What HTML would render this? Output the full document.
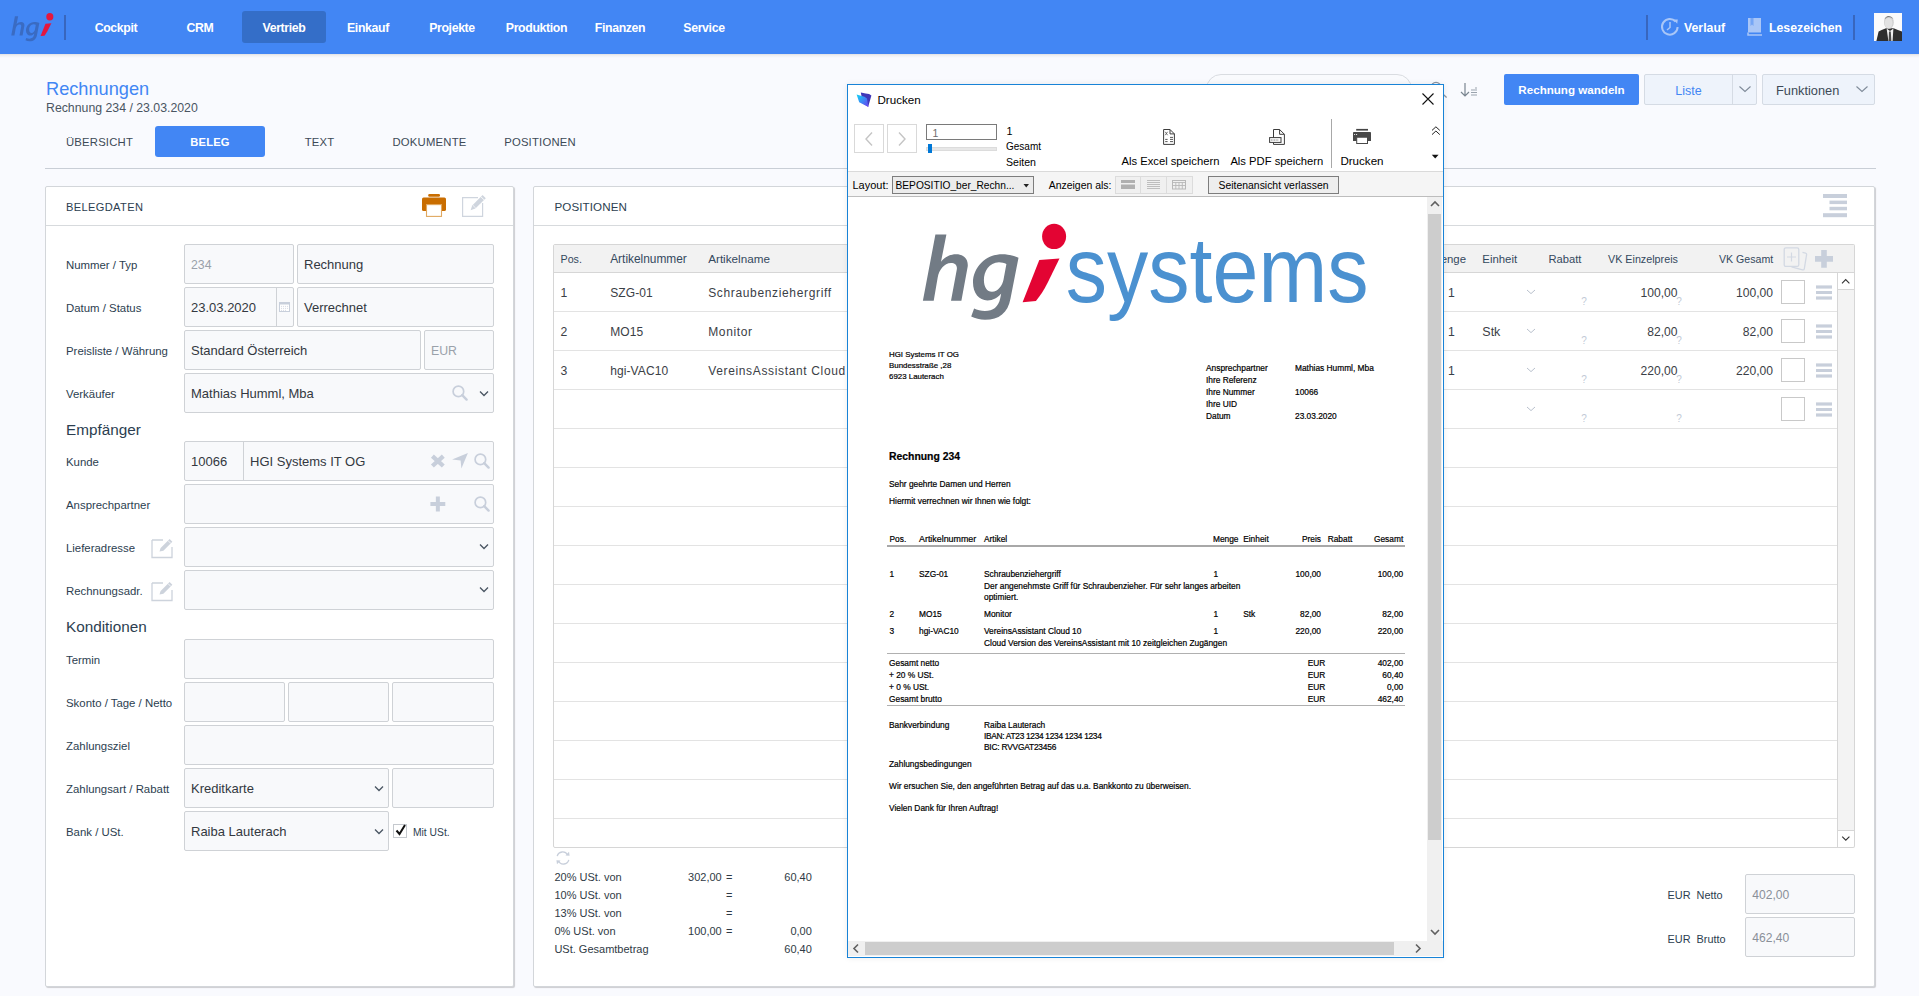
<!DOCTYPE html>
<html><head><meta charset="utf-8"><style>
*{box-sizing:border-box;margin:0;padding:0}
html,body{width:1919px;height:996px;overflow:hidden;background:#f9fafe;font-family:"Liberation Sans",sans-serif;color:#2c3e50}
body{position:relative}
.a{position:absolute;white-space:nowrap}
</style></head><body>
<div class="a" style="left:0px;top:0px;width:1919px;height:54px;background:#4286f4;"></div>
<div class="a" style="left:0px;top:54px;width:1919px;height:4px;background:linear-gradient(rgba(60,50,40,.13),rgba(60,50,40,.05) 40%,rgba(0,0,0,0));"></div>
<svg class="a" style="left:0;top:0" width="64" height="54" viewBox="0 0 64 54"><g transform="translate(11.25 35.6) scale(0.294) translate(-922.9 -300.7)"><g fill="#3a6bc2"><path d="M935.4 234.6 L946.4 234.6 L941 261.8 C945 257 950 254.3 956.2 254.3 C964 254.3 968.5 259.5 967.7 266.5 L961.4 300.7 L951 300.7 L956.8 269.5 C957.5 265 955 262.9 951 262.9 C944 262.9 939 270 937.7 277.4 L933.7 300.7 L922.9 300.7 Z"/><path fill-rule="evenodd" d="M1018.5 257.7 C1013 255.3 1007 254.3 1002.4 254.3 C985 254.3 973 268 973 282.5 C973 293 979 300.4 987.5 300.4 C993 300.4 998 297.5 1001.2 293.5 L1000.3 298 C998.5 307 993 311 985 311 C981 311 977 310 974.1 308.5 L971.2 316.6 C975 318.5 980 319.8 985 319.8 C999 319.8 1008 313 1010.5 298.5 Z M1006.4 264 C1004.5 263 1001.5 262.3 999 262.3 C989 262.3 983.9 272 983.9 280 C983.9 287 987 291.8 992 291.8 C998 291.8 1002.5 285 1003.5 279.7 Z"/></g><g fill="#e4173e"><path d="M1039.3 260 L1059.5 258.6 L1048 282 C1044 290 1040 296 1035.9 301 L1022.6 302.2 Z"/><ellipse cx="1054.1" cy="236.4" rx="12" ry="12.7"/></g></g></svg>
<div class="a" style="left:64px;top:15px;width:2px;height:25px;background:#3866bd;"></div>
<div class="a" style="left:242px;top:11px;width:84px;height:32px;background:#346ec8;border-radius:3px;"></div>
<div class="a " style="top:21px;font-size:12.3px;line-height:14px;color:#fff;font-weight:bold;left:66.0px;width:100px;text-align:center;letter-spacing:-.35px;">Cockpit</div>
<div class="a " style="top:21px;font-size:12.3px;line-height:14px;color:#fff;font-weight:bold;left:150.0px;width:100px;text-align:center;letter-spacing:-.35px;">CRM</div>
<div class="a " style="top:21px;font-size:12.3px;line-height:14px;color:#fff;font-weight:bold;left:234.0px;width:100px;text-align:center;letter-spacing:-.35px;">Vertrieb</div>
<div class="a " style="top:21px;font-size:12.3px;line-height:14px;color:#fff;font-weight:bold;left:318.0px;width:100px;text-align:center;letter-spacing:-.35px;">Einkauf</div>
<div class="a " style="top:21px;font-size:12.3px;line-height:14px;color:#fff;font-weight:bold;left:402.0px;width:100px;text-align:center;letter-spacing:-.35px;">Projekte</div>
<div class="a " style="top:21px;font-size:12.3px;line-height:14px;color:#fff;font-weight:bold;left:486.5px;width:100px;text-align:center;letter-spacing:-.35px;">Produktion</div>
<div class="a " style="top:21px;font-size:12.3px;line-height:14px;color:#fff;font-weight:bold;left:570.0px;width:100px;text-align:center;letter-spacing:-.35px;">Finanzen</div>
<div class="a " style="top:21px;font-size:12.3px;line-height:14px;color:#fff;font-weight:bold;left:654.0px;width:100px;text-align:center;letter-spacing:-.35px;">Service</div>
<div class="a" style="left:1646px;top:15px;width:2px;height:25px;background:#3866bd;"></div>
<svg class="a" style="left:1660px;top:17px;" width="20" height="20" viewBox="0 0 20 20"><path d="M15.6 4.6 A7.8 7.8 0 1 0 17.6 10" fill="none" stroke="#a9c6f7" stroke-width="2"/><path d="M13.6 2.4 L17.8 2.6 L17.2 6.8 Z" fill="#a9c6f7"/><path d="M10 5 L10 10.5 L7 13" fill="none" stroke="#a9c6f7" stroke-width="1.5"/></svg>
<div class="a " style="top:21px;font-size:12.3px;line-height:14px;color:#fff;font-weight:bold;left:1684px;">Verlauf</div>
<svg class="a" style="left:1746px;top:17px;" width="18" height="20" viewBox="0 0 18 20"><path d="M2 1 L15 1 L15 15.5 L2 15.5 Z" fill="#a9c6f7"/><path d="M2 15.5 L2 18 L16 18" fill="none" stroke="#a9c6f7" stroke-width="1.5"/><path d="M4.5 1 L4.5 9 L6 7.5 L7.5 9 L7.5 1 Z" fill="#4286f4" opacity=".5"/></svg>
<div class="a " style="top:21px;font-size:12.3px;line-height:14px;color:#fff;font-weight:bold;left:1769px;">Lesezeichen</div>
<div class="a" style="left:1853px;top:15px;width:2px;height:25px;background:#3866bd;"></div>
<svg class="a" style="left:1874px;top:13px;" width="28" height="28" viewBox="0 0 28 28"><rect width="28" height="28" fill="#fbfbfb"/><path d="M2.4 28 L4.6 18.6 Q7 17 12 15.2 L19.6 15.2 Q24 16.8 28 18.6 L28 28 Z" fill="#2e2e2e"/><path d="M12.6 15.4 L14.4 28 L18.6 28 L19.4 15.6 L16 18 Z" fill="#f0f0f0"/><path d="M15 18.4 L14.6 28 L17.4 28 L16.8 18.4 Z" fill="#4a4a4a"/><ellipse cx="14.9" cy="9.4" rx="4.9" ry="6.4" fill="#cfcfcf"/><ellipse cx="14.6" cy="10" rx="3.9" ry="5.2" fill="#e2e2e2"/><path d="M10.4 6.4 Q14.6 1.6 19.6 6.2 Q18 3.2 14.8 3 Q11.6 3.2 10.4 6.4 Z" fill="#777"/></svg>
<div class="a " style="top:79px;font-size:18.2px;line-height:20px;color:#4286f4;left:46px;">Rechnungen</div>
<div class="a " style="top:101px;font-size:12.3px;line-height:14px;color:#4a5562;left:46px;">Rechnung 234 / 23.03.2020</div>
<div class="a" style="left:155px;top:126px;width:110px;height:31px;background:#4286f4;border-radius:3px;"></div>
<div class="a " style="top:136px;font-size:11.3px;line-height:12px;color:#3d4a57;left:29.5px;width:140px;text-align:center;letter-spacing:.2px;">ÜBERSICHT</div>
<div class="a " style="top:136px;font-size:11.2px;line-height:12px;color:#fff;font-weight:bold;left:140.0px;width:140px;text-align:center;letter-spacing:.2px;">BELEG</div>
<div class="a " style="top:136px;font-size:11.3px;line-height:12px;color:#3d4a57;left:249.5px;width:140px;text-align:center;letter-spacing:.2px;">TEXT</div>
<div class="a " style="top:136px;font-size:11.3px;line-height:12px;color:#3d4a57;left:359.5px;width:140px;text-align:center;letter-spacing:.2px;">DOKUMENTE</div>
<div class="a " style="top:136px;font-size:11.3px;line-height:12px;color:#3d4a57;left:470.0px;width:140px;text-align:center;letter-spacing:.2px;">POSITIONEN</div>
<div class="a" style="left:45px;top:168px;width:1831px;height:1px;background:#c9ced6;"></div>
<div class="a" style="left:1206px;top:74px;width:206px;height:31px;border:1px solid #d9dce1;border-radius:15px;background:#f9fafd;"></div>
<svg class="a" style="left:1426px;top:78px;" width="24" height="24" viewBox="1426 78 24 24"><circle cx="1436" cy="87.4" r="5" fill="none" stroke="#8a94a0" stroke-width="1.3"/><path d="M1439.6 91 L1446.6 97.4" stroke="#8a94a0" stroke-width="1.3"/></svg>
<svg class="a" style="left:1459px;top:82px;" width="22" height="18" viewBox="0 0 22 18"><path d="M6 1 L6 14 M2 10 L6 14 L10 10" fill="none" stroke="#7a8590" stroke-width="1.2"/><path d="M12 8 H18 M12 10.5 H18 M12 13 H18" stroke="#9aa3ad" stroke-width="1"/><path d="M16 6 H18" stroke="#9aa3ad" stroke-width="1"/></svg>
<div class="a" style="left:1504px;top:74px;width:135px;height:31px;background:#4286f4;border-radius:2px;"></div>
<div class="a " style="top:84px;font-size:11.6px;line-height:12px;color:#fff;font-weight:bold;left:1501.5px;width:140px;text-align:center;">Rechnung wandeln</div>
<div class="a" style="left:1644px;top:74px;width:113px;height:31px;background:#eef3fb;border:1px solid #d5dbe4;border-radius:2px;"></div>
<div class="a" style="left:1732px;top:75px;width:1px;height:29px;background:#d5dbe4;"></div>
<div class="a " style="top:84px;font-size:12.5px;line-height:14px;color:#4286f4;left:1648.5px;width:80px;text-align:center;">Liste</div>
<svg class="a" style="left:1738px;top:83px;" width="14" height="12" viewBox="0 0 14 12"><path d="M1.5 3.5 L7 8.5 L12.5 3.5" fill="none" stroke="#7f8b99" stroke-width="1.1"/></svg>
<div class="a" style="left:1762px;top:74px;width:113px;height:31px;background:#eef3fb;border:1px solid #d5dbe4;border-radius:2px;"></div>
<div class="a " style="top:83px;font-size:12.8px;line-height:15px;color:#3d4a57;left:1776px;">Funktionen</div>
<svg class="a" style="left:1855px;top:83px;" width="14" height="12" viewBox="0 0 14 12"><path d="M1.5 3.5 L7 8.5 L12.5 3.5" fill="none" stroke="#7f8b99" stroke-width="1.1"/></svg>
<div class="a" style="left:45px;top:186px;width:469px;height:801px;background:#fff;border:1px solid #d3d6da;border-radius:2px;box-shadow:1px 1px 1px rgba(0,0,0,.18);"></div>
<div class="a" style="left:46px;top:225px;width:467px;height:1px;background:#d7dadd;"></div>
<div class="a " style="top:201px;font-size:11.1px;line-height:12px;color:#2c3e50;left:66px;letter-spacing:.35px;">BELEGDATEN</div>
<svg class="a" style="left:418px;top:190px;" width="32" height="30" viewBox="418 190 32 30"><rect x="428.2" y="193.9" width="11.8" height="2.9" rx="1.3" fill="#c96d00"/><rect x="422" y="197.6" width="24" height="13.4" rx="1.6" fill="#c96d00"/><rect x="426.5" y="204.6" width="15" height="11.8" fill="#fff" stroke="#e0a860" stroke-width="1.1"/></svg>
<svg class="a" style="left:458px;top:190px;" width="32" height="30" viewBox="458 190 32 30"><path d="M478 197.7 H462.6 V216.3 H482.6 V203" fill="none" stroke="#cfd5de" stroke-width="1.2"/><path d="M470.6 210.2 L472.2 205.4 L482.6 195 L485.8 198.2 L475.4 208.6 Z" fill="#cfd5de"/><path d="M480.9 196.7 L484.1 199.9" stroke="#fff" stroke-width=".9"/><path d="M472.6 205 L475.8 208.2" stroke="#fff" stroke-width=".7"/></svg>
<div class="a " style="top:259px;font-size:11.4px;line-height:12px;color:#2c3e50;left:66px;">Nummer / Typ</div>
<div class="a " style="top:302px;font-size:11.4px;line-height:12px;color:#2c3e50;left:66px;">Datum / Status</div>
<div class="a " style="top:345px;font-size:11.4px;line-height:12px;color:#2c3e50;left:66px;">Preisliste / Währung</div>
<div class="a " style="top:388px;font-size:11.4px;line-height:12px;color:#2c3e50;left:66px;">Verkäufer</div>
<div class="a " style="top:456px;font-size:11.4px;line-height:12px;color:#2c3e50;left:66px;">Kunde</div>
<div class="a " style="top:499px;font-size:11.4px;line-height:12px;color:#2c3e50;left:66px;">Ansprechpartner</div>
<div class="a " style="top:542px;font-size:11.4px;line-height:12px;color:#2c3e50;left:66px;">Lieferadresse</div>
<div class="a " style="top:585px;font-size:11.4px;line-height:12px;color:#2c3e50;left:66px;">Rechnungsadr.</div>
<div class="a " style="top:654px;font-size:11.4px;line-height:12px;color:#2c3e50;left:66px;">Termin</div>
<div class="a " style="top:697px;font-size:11.4px;line-height:12px;color:#2c3e50;left:66px;">Skonto / Tage / Netto</div>
<div class="a " style="top:740px;font-size:11.4px;line-height:12px;color:#2c3e50;left:66px;">Zahlungsziel</div>
<div class="a " style="top:783px;font-size:11.4px;line-height:12px;color:#2c3e50;left:66px;">Zahlungsart / Rabatt</div>
<div class="a " style="top:826px;font-size:11.4px;line-height:12px;color:#2c3e50;left:66px;">Bank / USt.</div>
<div class="a " style="top:421px;font-size:15.3px;line-height:17px;color:#2c3e50;left:66px;">Empfänger</div>
<div class="a " style="top:618px;font-size:15.3px;line-height:17px;color:#2c3e50;left:66px;">Konditionen</div>
<div class="a" style="left:184px;top:244px;width:110px;height:40px;background:#f8f9fb;border:1px solid #cfd2d6;border-radius:2px;"></div>
<div class="a" style="left:297px;top:244px;width:197px;height:40px;background:#f8f9fb;border:1px solid #cfd2d6;border-radius:2px;"></div>
<div class="a " style="top:258px;font-size:12.3px;line-height:14px;color:#9aa1aa;left:191px;">234</div>
<div class="a " style="top:257px;font-size:13px;line-height:15px;color:#333840;left:304px;">Rechnung</div>
<div class="a" style="left:184px;top:287px;width:110px;height:40px;background:#f8f9fb;border:1px solid #cfd2d6;border-radius:2px;"></div>
<div class="a" style="left:276px;top:288px;width:1px;height:38px;background:#cfd2d6;"></div>
<div class="a" style="left:297px;top:287px;width:197px;height:40px;background:#f8f9fb;border:1px solid #cfd2d6;border-radius:2px;"></div>
<div class="a " style="top:300px;font-size:13px;line-height:15px;color:#333840;left:191px;">23.03.2020</div>
<svg class="a" style="left:279px;top:302px;" width="11" height="10" viewBox="0 0 11 10"><rect x=".5" y=".5" width="10" height="9" fill="#fff" stroke="#c8cfdb"/><rect x=".5" y=".5" width="10" height="2" fill="#c8cfdb"/><g fill="#c8cfdb"><circle cx="2.6" cy="4.2" r=".55"/><circle cx="4.6" cy="4.2" r=".55"/><circle cx="6.6" cy="4.2" r=".55"/><circle cx="8.6" cy="4.2" r=".55"/><circle cx="2.6" cy="6.2" r=".55"/><circle cx="4.6" cy="6.2" r=".55"/><circle cx="6.6" cy="6.2" r=".55"/><circle cx="8.6" cy="6.2" r=".55"/><circle cx="2.6" cy="8.2" r=".55"/><circle cx="4.6" cy="8.2" r=".55"/><circle cx="6.6" cy="8.2" r=".55"/></g></svg>
<div class="a " style="top:300px;font-size:13px;line-height:15px;color:#333840;left:304px;">Verrechnet</div>
<div class="a" style="left:184px;top:330px;width:237px;height:40px;background:#f8f9fb;border:1px solid #cfd2d6;border-radius:2px;"></div>
<div class="a" style="left:424px;top:330px;width:70px;height:40px;background:#f8f9fb;border:1px solid #cfd2d6;border-radius:2px;"></div>
<div class="a " style="top:343px;font-size:13px;line-height:15px;color:#333840;left:191px;">Standard Österreich</div>
<div class="a " style="top:344px;font-size:12.3px;line-height:14px;color:#9aa1aa;left:431px;">EUR</div>
<div class="a" style="left:184px;top:373px;width:310px;height:40px;background:#f8f9fb;border:1px solid #cfd2d6;border-radius:2px;"></div>
<div class="a " style="top:386px;font-size:13px;line-height:15px;color:#333840;left:191px;">Mathias Humml, Mba</div>
<svg class="a" style="left:452px;top:385px;" width="16" height="16" viewBox="0 0 16 16"><circle cx="6.4" cy="6.4" r="5.3" fill="none" stroke="#c8cfdb" stroke-width="1.7"/><path d="M10.2 10.2 L14.6 14.6" stroke="#c8cfdb" stroke-width="2.4" stroke-linecap="round"/></svg>
<svg class="a" style="left:479px;top:390px;" width="10" height="7" viewBox="0 0 10 7"><path d="M1 1.5 L5 5.5 L9 1.5" fill="none" stroke="#4a5562" stroke-width="1.3"/></svg>
<div class="a" style="left:184px;top:441px;width:310px;height:40px;background:#f8f9fb;border:1px solid #cfd2d6;border-radius:2px;"></div>
<div class="a" style="left:243px;top:442px;width:1px;height:38px;background:#cfd2d6;"></div>
<div class="a " style="top:454px;font-size:13px;line-height:15px;color:#333840;left:191px;">10066</div>
<div class="a " style="top:454px;font-size:13px;line-height:15px;color:#333840;left:250px;">HGI Systems IT OG</div>
<svg class="a" style="left:428px;top:452px;" width="20" height="18" viewBox="428 452 20 18"><path d="M432.4 456.1 L443.3 466 M443.3 456.1 L432.4 466" stroke="#c8cfdb" stroke-width="4.3" stroke-linecap="butt"/></svg>
<svg class="a" style="left:451px;top:452px;" width="18" height="18" viewBox="0 0 18 18"><path d="M1.1 7.4 L16.9 1.1 L10.4 16.5 L9.6 8.6 Z" fill="#c8cfdb"/></svg>
<svg class="a" style="left:474px;top:453px;" width="16" height="16" viewBox="0 0 16 16"><circle cx="6.4" cy="6.4" r="5.3" fill="none" stroke="#c8cfdb" stroke-width="1.7"/><path d="M10.2 10.2 L14.6 14.6" stroke="#c8cfdb" stroke-width="2.4" stroke-linecap="round"/></svg>
<div class="a" style="left:184px;top:484px;width:310px;height:40px;background:#f8f9fb;border:1px solid #cfd2d6;border-radius:2px;"></div>
<svg class="a" style="left:428px;top:494px;" width="20" height="20" viewBox="428 494 20 20"><path d="M437.85 496.5 V511.4 M430.4 503.95 H445.3" stroke="#c8cfdb" stroke-width="4"/></svg>
<svg class="a" style="left:474px;top:496px;" width="16" height="16" viewBox="0 0 16 16"><circle cx="6.4" cy="6.4" r="5.3" fill="none" stroke="#c8cfdb" stroke-width="1.7"/><path d="M10.2 10.2 L14.6 14.6" stroke="#c8cfdb" stroke-width="2.4" stroke-linecap="round"/></svg>
<div class="a" style="left:184px;top:527px;width:310px;height:40px;background:#f8f9fb;border:1px solid #cfd2d6;border-radius:2px;"></div>
<svg class="a" style="left:479px;top:543px;" width="10" height="7" viewBox="0 0 10 7"><path d="M1 1.5 L5 5.5 L9 1.5" fill="none" stroke="#4a5562" stroke-width="1.3"/></svg>
<svg class="a" style="left:150px;top:537px;" width="26" height="24" viewBox="0 0 26 24"><path d="M2 3 H13 M2 3 V20.5 H22 V10" fill="none" stroke="#cdd3dc" stroke-width="1.3"/><path d="M9.5 14.5 L10.6 11 L19.6 2 L22.4 4.8 L13.4 13.8 Z" fill="#cdd3dc"/><path d="M18 3.6 L20.8 6.4" stroke="#fff" stroke-width=".8"/></svg>
<div class="a" style="left:184px;top:570px;width:310px;height:40px;background:#f8f9fb;border:1px solid #cfd2d6;border-radius:2px;"></div>
<svg class="a" style="left:479px;top:586px;" width="10" height="7" viewBox="0 0 10 7"><path d="M1 1.5 L5 5.5 L9 1.5" fill="none" stroke="#4a5562" stroke-width="1.3"/></svg>
<svg class="a" style="left:150px;top:580px;" width="26" height="24" viewBox="0 0 26 24"><path d="M2 3 H13 M2 3 V20.5 H22 V10" fill="none" stroke="#cdd3dc" stroke-width="1.3"/><path d="M9.5 14.5 L10.6 11 L19.6 2 L22.4 4.8 L13.4 13.8 Z" fill="#cdd3dc"/><path d="M18 3.6 L20.8 6.4" stroke="#fff" stroke-width=".8"/></svg>
<div class="a" style="left:184px;top:639px;width:310px;height:40px;background:#f8f9fb;border:1px solid #cfd2d6;border-radius:2px;"></div>
<div class="a" style="left:184px;top:682px;width:101px;height:40px;background:#f8f9fb;border:1px solid #cfd2d6;border-radius:2px;"></div>
<div class="a" style="left:288px;top:682px;width:101px;height:40px;background:#f8f9fb;border:1px solid #cfd2d6;border-radius:2px;"></div>
<div class="a" style="left:392px;top:682px;width:102px;height:40px;background:#f8f9fb;border:1px solid #cfd2d6;border-radius:2px;"></div>
<div class="a" style="left:184px;top:725px;width:310px;height:40px;background:#f8f9fb;border:1px solid #cfd2d6;border-radius:2px;"></div>
<div class="a" style="left:184px;top:768px;width:205px;height:40px;background:#f8f9fb;border:1px solid #cfd2d6;border-radius:2px;"></div>
<div class="a" style="left:392px;top:768px;width:102px;height:40px;background:#f8f9fb;border:1px solid #cfd2d6;border-radius:2px;"></div>
<div class="a " style="top:781px;font-size:13px;line-height:15px;color:#333840;left:191px;">Kreditkarte</div>
<svg class="a" style="left:374px;top:785px;" width="10" height="7" viewBox="0 0 10 7"><path d="M1 1.5 L5 5.5 L9 1.5" fill="none" stroke="#4a5562" stroke-width="1.3"/></svg>
<div class="a" style="left:184px;top:811px;width:205px;height:40px;background:#f8f9fb;border:1px solid #cfd2d6;border-radius:2px;"></div>
<div class="a " style="top:824px;font-size:13px;line-height:15px;color:#333840;left:191px;">Raiba Lauterach</div>
<svg class="a" style="left:374px;top:828px;" width="10" height="7" viewBox="0 0 10 7"><path d="M1 1.5 L5 5.5 L9 1.5" fill="none" stroke="#4a5562" stroke-width="1.3"/></svg>
<div class="a" style="left:393px;top:824px;width:14px;height:14px;background:#fff;border:1px solid #c5c9ce;"></div>
<svg class="a" style="left:393px;top:822px;" width="16" height="16" viewBox="0 0 16 16"><path d="M3.5 8.5 L6.5 12 L12 3" fill="none" stroke="#111" stroke-width="2"/></svg>
<div class="a " style="top:827px;font-size:10.3px;line-height:11px;color:#2c3e50;left:413px;">Mit USt.</div>
<div class="a" style="left:533px;top:186px;width:1342px;height:801px;background:#fff;border:1px solid #d3d6da;border-radius:2px;box-shadow:1px 1px 1px rgba(0,0,0,.18);"></div>
<div class="a" style="left:534px;top:225px;width:1340px;height:1px;background:#d7dadd;"></div>
<div class="a " style="top:201px;font-size:11.6px;line-height:12px;color:#2c3e50;left:554.5px;letter-spacing:.1px;">POSITIONEN</div>
<svg class="a" style="left:1823px;top:194px;" width="24" height="24" viewBox="0 0 24 24"><g fill="#c8cfdb"><rect x="0" y="0" width="24" height="4"/><rect x="6.5" y="6.6" width="17.5" height="3.5"/><rect x="6.5" y="12.8" width="17.5" height="3.5"/><rect x="0" y="19.2" width="24" height="4"/></g></svg>
<div class="a" style="left:553px;top:244px;width:302px;height:604px;border:1px solid #d6d6d6;border-radius:2px;background:#fff;"></div>
<div class="a" style="left:1443px;top:244px;width:412px;height:604px;border:1px solid #d6d6d6;border-right-width:1px;border-left:none;border-radius:2px;background:#fff;"></div>
<div class="a" style="left:554px;top:245px;width:300px;height:27px;background:#f2f2f2;"></div>
<div class="a" style="left:1443px;top:245px;width:411px;height:27px;background:#f2f2f2;"></div>
<div class="a" style="left:553px;top:272px;width:302px;height:1px;background:#d6d6d6;"></div>
<div class="a" style="left:1443px;top:272px;width:412px;height:1px;background:#d6d6d6;"></div>
<div class="a " style="top:253px;font-size:10.7px;line-height:12px;color:#34495e;left:560.5px;">Pos.</div>
<div class="a " style="top:252px;font-size:11.9px;line-height:14px;color:#34495e;left:610.2px;">Artikelnummer</div>
<div class="a " style="top:252px;font-size:11.7px;line-height:13px;color:#34495e;left:708.2px;">Artikelname</div>
<div class="a " style="top:253px;font-size:11.4px;line-height:12px;color:#34495e;right:453px;text-align:right;">Menge</div>
<div class="a " style="top:253px;font-size:11.4px;line-height:12px;color:#34495e;left:1482.3px;">Einheit</div>
<div class="a " style="top:253px;font-size:11.2px;line-height:12px;color:#34495e;left:1548.4px;">Rabatt</div>
<div class="a " style="top:253px;font-size:10.75px;line-height:12px;color:#34495e;left:1608px;">VK Einzelpreis</div>
<div class="a " style="top:253px;font-size:10.6px;line-height:12px;color:#34495e;left:1719px;">VK Gesamt</div>
<svg class="a" style="left:1782px;top:246px;" width="26" height="26" viewBox="0 0 26 26"><path d="M9.5 20.8 L20.6 23.8 Q22 24.1 22.3 22.8 L24.6 8.6 Q24.8 7.4 23.6 7.1 L20.5 6.3" fill="none" stroke="#d3d9e3" stroke-width="1.3"/><rect x="2.2" y="1.8" width="14.6" height="18.6" rx="1.6" fill="#f2f2f2" stroke="#d3d9e3" stroke-width="1.3"/><path d="M9.5 6.5 V15.5 M5 11 H14" stroke="#d3d9e3" stroke-width="1.2"/></svg>
<svg class="a" style="left:1815px;top:250px;" width="18" height="18" viewBox="0 0 18 18"><path d="M9 0 V17.7 M0 8.85 H18" stroke="#c8cfdb" stroke-width="5.6"/></svg>
<div class="a" style="left:554px;top:311px;width:300px;height:1px;background:#e3e3e3;"></div>
<div class="a" style="left:1443px;top:311px;width:394px;height:1px;background:#e3e3e3;"></div>
<div class="a" style="left:554px;top:350px;width:300px;height:1px;background:#e3e3e3;"></div>
<div class="a" style="left:1443px;top:350px;width:394px;height:1px;background:#e3e3e3;"></div>
<div class="a" style="left:554px;top:389px;width:300px;height:1px;background:#e3e3e3;"></div>
<div class="a" style="left:1443px;top:389px;width:394px;height:1px;background:#e3e3e3;"></div>
<div class="a" style="left:554px;top:428px;width:300px;height:1px;background:#e3e3e3;"></div>
<div class="a" style="left:1443px;top:428px;width:394px;height:1px;background:#e3e3e3;"></div>
<div class="a" style="left:554px;top:467px;width:300px;height:1px;background:#e3e3e3;"></div>
<div class="a" style="left:1443px;top:467px;width:394px;height:1px;background:#e3e3e3;"></div>
<div class="a" style="left:554px;top:506px;width:300px;height:1px;background:#e3e3e3;"></div>
<div class="a" style="left:1443px;top:506px;width:394px;height:1px;background:#e3e3e3;"></div>
<div class="a" style="left:554px;top:545px;width:300px;height:1px;background:#e3e3e3;"></div>
<div class="a" style="left:1443px;top:545px;width:394px;height:1px;background:#e3e3e3;"></div>
<div class="a" style="left:554px;top:584px;width:300px;height:1px;background:#e3e3e3;"></div>
<div class="a" style="left:1443px;top:584px;width:394px;height:1px;background:#e3e3e3;"></div>
<div class="a" style="left:554px;top:623px;width:300px;height:1px;background:#e3e3e3;"></div>
<div class="a" style="left:1443px;top:623px;width:394px;height:1px;background:#e3e3e3;"></div>
<div class="a" style="left:554px;top:662px;width:300px;height:1px;background:#e3e3e3;"></div>
<div class="a" style="left:1443px;top:662px;width:394px;height:1px;background:#e3e3e3;"></div>
<div class="a" style="left:554px;top:701px;width:300px;height:1px;background:#e3e3e3;"></div>
<div class="a" style="left:1443px;top:701px;width:394px;height:1px;background:#e3e3e3;"></div>
<div class="a" style="left:554px;top:740px;width:300px;height:1px;background:#e3e3e3;"></div>
<div class="a" style="left:1443px;top:740px;width:394px;height:1px;background:#e3e3e3;"></div>
<div class="a" style="left:554px;top:779px;width:300px;height:1px;background:#e3e3e3;"></div>
<div class="a" style="left:1443px;top:779px;width:394px;height:1px;background:#e3e3e3;"></div>
<div class="a" style="left:554px;top:818px;width:300px;height:1px;background:#e3e3e3;"></div>
<div class="a" style="left:1443px;top:818px;width:394px;height:1px;background:#e3e3e3;"></div>
<div class="a " style="top:286px;font-size:12.2px;line-height:14px;color:#3b4046;left:560.5px;">1</div>
<div class="a " style="top:286px;font-size:12.0px;line-height:14px;color:#3b4046;left:610.2px;letter-spacing:.1px;">SZG-01</div>
<div class="a " style="top:286px;font-size:12.0px;line-height:14px;color:#3b4046;left:708.2px;letter-spacing:.65px;">Schraubenziehergriff</div>
<div class="a " style="top:286px;font-size:12.2px;line-height:14px;color:#3b4046;left:1448px;">1</div>
<div class="a " style="top:286px;font-size:12.1px;line-height:14px;color:#3b4046;right:241.5px;text-align:right;">100,00</div>
<div class="a " style="top:286px;font-size:12.1px;line-height:14px;color:#3b4046;right:146px;text-align:right;">100,00</div>
<svg class="a" style="left:1526px;top:289px;" width="10" height="6" viewBox="0 0 10 6"><path d="M1 1 L5 4.6 L9 1" fill="none" stroke="#b9c1cd" stroke-width="1"/></svg>
<div class="a " style="top:296px;font-size:10px;line-height:11px;color:#c2cad6;left:1581.3px;">?</div>
<div class="a " style="top:296px;font-size:10px;line-height:11px;color:#c2cad6;left:1676.2px;">?</div>
<div class="a" style="left:1781px;top:280px;width:24px;height:24px;border:1px solid #c9c9c9;background:#fff;"></div>
<svg class="a" style="left:1816px;top:285px;" width="16" height="15" viewBox="0 0 16 15"><g fill="#c8cfdb"><rect y="0.4" width="16" height="3.2"/><rect y="6" width="16" height="3"/><rect y="11.4" width="16" height="3.2"/></g></svg>
<div class="a " style="top:325px;font-size:12.2px;line-height:14px;color:#3b4046;left:560.5px;">2</div>
<div class="a " style="top:325px;font-size:12.0px;line-height:14px;color:#3b4046;left:610.2px;letter-spacing:.1px;">MO15</div>
<div class="a " style="top:325px;font-size:12.0px;line-height:14px;color:#3b4046;left:708.2px;letter-spacing:.65px;">Monitor</div>
<div class="a " style="top:325px;font-size:12.2px;line-height:14px;color:#3b4046;left:1448px;">1</div>
<div class="a " style="top:325px;font-size:12.5px;line-height:14px;color:#3b4046;left:1482.3px;">Stk</div>
<div class="a " style="top:325px;font-size:12.1px;line-height:14px;color:#3b4046;right:241.5px;text-align:right;">82,00</div>
<div class="a " style="top:325px;font-size:12.1px;line-height:14px;color:#3b4046;right:146px;text-align:right;">82,00</div>
<svg class="a" style="left:1526px;top:328px;" width="10" height="6" viewBox="0 0 10 6"><path d="M1 1 L5 4.6 L9 1" fill="none" stroke="#b9c1cd" stroke-width="1"/></svg>
<div class="a " style="top:335px;font-size:10px;line-height:11px;color:#c2cad6;left:1581.3px;">?</div>
<div class="a " style="top:335px;font-size:10px;line-height:11px;color:#c2cad6;left:1676.2px;">?</div>
<div class="a" style="left:1781px;top:319px;width:24px;height:24px;border:1px solid #c9c9c9;background:#fff;"></div>
<svg class="a" style="left:1816px;top:324px;" width="16" height="15" viewBox="0 0 16 15"><g fill="#c8cfdb"><rect y="0.4" width="16" height="3.2"/><rect y="6" width="16" height="3"/><rect y="11.4" width="16" height="3.2"/></g></svg>
<div class="a " style="top:364px;font-size:12.2px;line-height:14px;color:#3b4046;left:560.5px;">3</div>
<div class="a " style="top:364px;font-size:12.0px;line-height:14px;color:#3b4046;left:610.2px;letter-spacing:.1px;">hgi-VAC10</div>
<div class="a " style="top:364px;font-size:12.0px;line-height:14px;color:#3b4046;left:708.2px;letter-spacing:.65px;">VereinsAssistant Cloud</div>
<div class="a " style="top:364px;font-size:12.2px;line-height:14px;color:#3b4046;left:1448px;">1</div>
<div class="a " style="top:364px;font-size:12.1px;line-height:14px;color:#3b4046;right:241.5px;text-align:right;">220,00</div>
<div class="a " style="top:364px;font-size:12.1px;line-height:14px;color:#3b4046;right:146px;text-align:right;">220,00</div>
<svg class="a" style="left:1526px;top:367px;" width="10" height="6" viewBox="0 0 10 6"><path d="M1 1 L5 4.6 L9 1" fill="none" stroke="#b9c1cd" stroke-width="1"/></svg>
<div class="a " style="top:374px;font-size:10px;line-height:11px;color:#c2cad6;left:1581.3px;">?</div>
<div class="a " style="top:374px;font-size:10px;line-height:11px;color:#c2cad6;left:1676.2px;">?</div>
<div class="a" style="left:1781px;top:358px;width:24px;height:24px;border:1px solid #c9c9c9;background:#fff;"></div>
<svg class="a" style="left:1816px;top:363px;" width="16" height="15" viewBox="0 0 16 15"><g fill="#c8cfdb"><rect y="0.4" width="16" height="3.2"/><rect y="6" width="16" height="3"/><rect y="11.4" width="16" height="3.2"/></g></svg>
<svg class="a" style="left:1526px;top:406px;" width="10" height="6" viewBox="0 0 10 6"><path d="M1 1 L5 4.6 L9 1" fill="none" stroke="#b9c1cd" stroke-width="1"/></svg>
<div class="a " style="top:413px;font-size:10px;line-height:11px;color:#c2cad6;left:1581.3px;">?</div>
<div class="a " style="top:413px;font-size:10px;line-height:11px;color:#c2cad6;left:1676.2px;">?</div>
<div class="a" style="left:1781px;top:397px;width:24px;height:24px;border:1px solid #c9c9c9;background:#fff;"></div>
<svg class="a" style="left:1816px;top:402px;" width="16" height="15" viewBox="0 0 16 15"><g fill="#c8cfdb"><rect y="0.4" width="16" height="3.2"/><rect y="6" width="16" height="3"/><rect y="11.4" width="16" height="3.2"/></g></svg>
<div class="a" style="left:1837px;top:272px;width:1px;height:575px;background:#d6d6d6;"></div>
<div class="a" style="left:1838px;top:290px;width:16px;height:540px;background:#f3f3f3;"></div>
<div class="a" style="left:1838px;top:289px;width:16px;height:1px;background:#d6d6d6;"></div>
<div class="a" style="left:1838px;top:830px;width:16px;height:1px;background:#d6d6d6;"></div>
<svg class="a" style="left:1838px;top:275px;" width="16" height="12" viewBox="1838 275 16 12"><path d="M1842 283.3 L1845.7 279.6 L1849.4 283.3" fill="none" stroke="#333" stroke-width="1.1"/></svg>
<svg class="a" style="left:1838px;top:832px;" width="16" height="12" viewBox="1838 832 16 12"><path d="M1842.2 836.6 L1845.8 840.2 L1849.4 836.6" fill="none" stroke="#333" stroke-width="1.1"/></svg>
<svg class="a" style="left:554px;top:850px;" width="18" height="16" viewBox="0 0 18 16"><path d="M3.2 6.2 A5.6 5.6 0 0 1 13.6 5" fill="none" stroke="#c8cfdb" stroke-width="1.3"/><path d="M14.8 9.8 A5.6 5.6 0 0 1 4.4 11" fill="none" stroke="#c8cfdb" stroke-width="1.3"/><path d="M11.5 5.4 L15.6 5.8 L15 1.8 Z" fill="#c8cfdb"/><path d="M6.5 10.6 L2.4 10.2 L3 14.2 Z" fill="#c8cfdb"/></svg>
<div class="a " style="top:871px;font-size:11.0px;line-height:12px;color:#2f3a45;left:554.4px;">20% USt. von</div>
<div class="a " style="top:871px;font-size:11.0px;line-height:12px;color:#2f3a45;right:1197.3px;text-align:right;">302,00</div>
<div class="a " style="top:871px;font-size:11.0px;line-height:12px;color:#2f3a45;left:726px;">=</div>
<div class="a " style="top:871px;font-size:11.0px;line-height:12px;color:#2f3a45;right:1107.2px;text-align:right;">60,40</div>
<div class="a " style="top:889px;font-size:11.0px;line-height:12px;color:#2f3a45;left:554.4px;">10% USt. von</div>
<div class="a " style="top:889px;font-size:11.0px;line-height:12px;color:#2f3a45;left:726px;">=</div>
<div class="a " style="top:907px;font-size:11.0px;line-height:12px;color:#2f3a45;left:554.4px;">13% USt. von</div>
<div class="a " style="top:907px;font-size:11.0px;line-height:12px;color:#2f3a45;left:726px;">=</div>
<div class="a " style="top:925px;font-size:11.0px;line-height:12px;color:#2f3a45;left:554.4px;">0% USt. von</div>
<div class="a " style="top:925px;font-size:11.0px;line-height:12px;color:#2f3a45;right:1197.3px;text-align:right;">100,00</div>
<div class="a " style="top:925px;font-size:11.0px;line-height:12px;color:#2f3a45;left:726px;">=</div>
<div class="a " style="top:925px;font-size:11.0px;line-height:12px;color:#2f3a45;right:1107.2px;text-align:right;">0,00</div>
<div class="a " style="top:943px;font-size:11.0px;line-height:12px;color:#2f3a45;left:554.4px;">USt. Gesamtbetrag</div>
<div class="a " style="top:943px;font-size:11.0px;line-height:12px;color:#2f3a45;right:1107.2px;text-align:right;">60,40</div>
<div class="a " style="top:889px;font-size:10.9px;line-height:12px;color:#2c3e50;left:1667.5px;">EUR&nbsp; Netto</div>
<div class="a " style="top:933px;font-size:10.9px;line-height:12px;color:#2c3e50;left:1667.5px;">EUR&nbsp; Brutto</div>
<div class="a" style="left:1745px;top:874px;width:110px;height:40px;background:#f8f9fb;border:1px solid #cfd2d6;border-radius:2px;"></div>
<div class="a" style="left:1745px;top:917px;width:110px;height:40px;background:#f8f9fb;border:1px solid #cfd2d6;border-radius:2px;"></div>
<div class="a " style="top:888px;font-size:12.1px;line-height:14px;color:#8a9099;left:1752.3px;">402,00</div>
<div class="a " style="top:931px;font-size:12.1px;line-height:14px;color:#8a9099;left:1752.3px;">462,40</div>
<div class="a" style="left:847px;top:84px;width:597px;height:874px;background:#fff;border:1px solid #1883d7;box-shadow:0 0 6px rgba(0,0,0,.08);"></div>
<svg class="a" style="left:855px;top:91px;" width="18" height="17" viewBox="0 0 18 17"><defs><linearGradient id="fg" x1="0" y1="0" x2="1" y2="1"><stop offset="0" stop-color="#12d6f5"/><stop offset=".5" stop-color="#3b8af5"/><stop offset="1" stop-color="#6a3cf0"/></linearGradient></defs><path d="M5.8 1.6 L10.6 2.6 Q14.6 2.8 16.4 4.6 L13.2 15.8 L8 12.6 Z" fill="#3f37b8"/><path d="M1.6 3.6 L5.8 4.8 Q10 5.4 12 7.4 L13.4 15.9 L4.2 11.2 Z" fill="url(#fg)"/></svg>
<div class="a " style="top:94px;font-size:11.6px;line-height:12px;color:#000;left:877.5px;">Drucken</div>
<svg class="a" style="left:1421px;top:92px;" width="14" height="14" viewBox="0 0 14 14"><path d="M1.5 1.5 L12.5 12.5 M12.5 1.5 L1.5 12.5" stroke="#111" stroke-width="1.1"/></svg>
<div class="a" style="left:854px;top:124px;width:30px;height:29px;border:1px solid #d9d9d9;background:#fff;"></div>
<div class="a" style="left:887px;top:124px;width:30px;height:29px;border:1px solid #d9d9d9;background:#fff;"></div>
<svg class="a" style="left:863px;top:131px;" width="12" height="16" viewBox="0 0 12 16"><path d="M9 1.5 L3 8 L9 14.5" fill="none" stroke="#c4c4c4" stroke-width="1.4"/></svg>
<svg class="a" style="left:896px;top:131px;" width="12" height="16" viewBox="0 0 12 16"><path d="M3 1.5 L9 8 L3 14.5" fill="none" stroke="#c4c4c4" stroke-width="1.4"/></svg>
<div class="a" style="left:926px;top:124px;width:71px;height:16px;border:1px solid #7a7a7a;background:#fff;"></div>
<div class="a " style="top:127px;font-size:10.5px;line-height:12px;color:#6d6d6d;left:932.5px;">1</div>
<div class="a" style="left:926px;top:147px;width:71px;height:4px;background:#e7e7e7;border:1px solid #dcdcdc;"></div>
<div class="a" style="left:928px;top:144px;width:4px;height:9px;background:#0078d7;"></div>
<div class="a " style="top:125px;font-size:10.8px;line-height:12px;color:#000;left:1006.4px;">1</div>
<div class="a " style="top:141px;font-size:10.0px;line-height:11px;color:#000;left:1006px;">Gesamt</div>
<div class="a " style="top:156px;font-size:10.58px;line-height:12px;color:#000;left:1006px;">Seiten</div>
<svg class="a" style="left:1160px;top:126px;" width="20" height="22" viewBox="1160 126 20 22"><path d="M1163.6 129.5 H1170 L1174.4 133.9 V144.4 H1163.6 Z" fill="#fff" stroke="#3c3c3c" stroke-width="1"/><path d="M1170 129.5 V133.9 H1174.4" fill="none" stroke="#3c3c3c" stroke-width="1"/><path d="M1165.2 131.8 L1167.6 135.2 M1167.6 131.8 L1165.2 135.2" stroke="#555" stroke-width=".8"/><path d="M1165.2 139.4 H1167.6 M1170 139.4 H1173 M1165.2 141.6 H1167.6 M1170 141.6 H1173 M1170 137.4 H1173" stroke="#444" stroke-width=".9"/></svg>
<div class="a " style="top:155px;font-size:11.23px;line-height:12px;color:#000;left:1121.5px;">Als Excel speichern</div>
<svg class="a" style="left:1266px;top:126px;" width="22" height="22" viewBox="1266 126 22 22"><path d="M1273.5 129.5 H1279.6 L1284.4 134.3 V144.4 H1273.5 Z" fill="#fff" stroke="#3c3c3c" stroke-width="1"/><path d="M1279.6 129.5 V134.3 H1284.4" fill="none" stroke="#3c3c3c" stroke-width="1"/><rect x="1269.6" y="137.6" width="11.4" height="4.8" fill="#fff" stroke="#3c3c3c" stroke-width="1"/><path d="M1271.4 139.1 V141 M1273 139.1 V141 M1274.6 139.1 V141 M1276.2 139.1 V141 M1277.8 139.1 V141" stroke="#888" stroke-width=".6"/></svg>
<div class="a " style="top:155px;font-size:11.23px;line-height:12px;color:#000;left:1230.4px;">Als PDF speichern</div>
<div class="a" style="left:1331px;top:119px;width:1px;height:49px;background:#a8a8a8;"></div>
<svg class="a" style="left:1350px;top:126px;" width="24" height="22" viewBox="1350 126 24 22"><rect x="1356.2" y="128.9" width="11.8" height="1.7" fill="#444"/><path d="M1353.8 132.1 H1370.2 Q1371 132.1 1371 133 V140.9 H1353 V133 Q1353 132.1 1353.8 132.1 Z" fill="#484848"/><rect x="1356.7" y="137.2" width="10.8" height="6.3" fill="#fff" stroke="#484848" stroke-width="1"/><circle cx="1354.6" cy="134.5" r=".6" fill="#fff"/><circle cx="1356.6" cy="134.5" r=".6" fill="#fff"/></svg>
<div class="a " style="top:155px;font-size:11.6px;line-height:12px;color:#000;left:1340.4px;">Drucken</div>
<svg class="a" style="left:1429px;top:124px;" width="14" height="13" viewBox="1429 124 14 13"><path d="M1432 130.4 L1435.9 126.8 L1439.8 130.4 M1432 134.6 L1435.9 131 L1439.8 134.6" fill="none" stroke="#222" stroke-width="1"/></svg>
<svg class="a" style="left:1429px;top:153px;" width="14" height="8" viewBox="1429 153 14 8"><path d="M1431.8 154.8 L1438.6 154.8 L1435.2 158.6 Z" fill="#111"/></svg>
<div class="a" style="left:848px;top:171px;width:595px;height:1px;background:#dadada;"></div>
<div class="a" style="left:848px;top:172px;width:595px;height:24px;background:#f5f5f5;"></div>
<div class="a" style="left:848px;top:196px;width:595px;height:1px;background:#bdbdbd;"></div>
<div class="a " style="top:179px;font-size:10.97px;line-height:12px;color:#000;left:852.5px;">Layout:</div>
<div class="a" style="left:892px;top:176px;width:142px;height:18px;background:#ececec;border:1px solid #7d7d7d;"></div>
<div class="a " style="top:180px;font-size:10.2px;line-height:11px;color:#000;left:895.5px;">BEPOSITIO_ber_Rechn...</div>
<svg class="a" style="left:1020px;top:182px;" width="12" height="8" viewBox="1020 182 12 8"><path d="M1023.5 184 L1029 184 L1026.25 187.4 Z" fill="#222"/></svg>
<div class="a " style="top:180px;font-size:10.46px;line-height:11px;color:#000;left:1048.7px;">Anzeigen als:</div>
<div class="a" style="left:1115px;top:176px;width:78px;height:18px;border:1px solid #dcdcdc;background:#f0f0f0;"></div>
<div class="a" style="left:1140px;top:177px;width:1px;height:16px;background:#dcdcdc;"></div>
<div class="a" style="left:1166px;top:177px;width:1px;height:16px;background:#dcdcdc;"></div>
<svg class="a" style="left:1121px;top:180px;" width="14" height="10" viewBox="0 0 14 10"><rect x="0" y="0" width="14" height="3" fill="#b0b0b0"/><rect x="0" y="4.5" width="14" height="4.5" fill="#b0b0b0"/></svg>
<svg class="a" style="left:1147px;top:180px;" width="14" height="10" viewBox="0 0 14 10"><path d="M0 .5 H13 M0 2.5 H13 M0 4.5 H13 M0 6.5 H13 M0 8.5 H13" stroke="#b8b8b8" stroke-width=".9"/></svg>
<svg class="a" style="left:1172px;top:180px;" width="15" height="10" viewBox="0 0 15 10"><rect x=".5" y=".5" width="13" height="8.5" fill="none" stroke="#b8b8b8"/><path d="M.5 2.5 H13.5 M.5 5.5 H13.5 M3.8 2.5 V9 M7 2.5 V9 M10.3 2.5 V9" stroke="#b8b8b8" stroke-width=".9"/></svg>
<div class="a" style="left:1208px;top:176px;width:131px;height:18px;background:#eeeeee;border:1px solid #7d7d7d;"></div>
<div class="a " style="top:180px;font-size:10.42px;line-height:11px;color:#000;left:1208.5px;width:130px;text-align:center;">Seitenansicht verlassen</div>
<div class="a" style="left:1427px;top:197px;width:15px;height:744px;background:#f0f0f0;"></div>
<div class="a" style="left:1428px;top:214px;width:13px;height:626px;background:#cdcdcd;"></div>
<svg class="a" style="left:1430px;top:200px;" width="10" height="8" viewBox="0 0 10 8"><path d="M1 6 L5 2 L9 6" fill="none" stroke="#606060" stroke-width="1.6"/></svg>
<svg class="a" style="left:1430px;top:928px;" width="10" height="8" viewBox="0 0 10 8"><path d="M1 2 L5 6 L9 2" fill="none" stroke="#606060" stroke-width="1.6"/></svg>
<div class="a" style="left:848px;top:941px;width:595px;height:15px;background:#f0f0f0;"></div>
<div class="a" style="left:865px;top:942px;width:529px;height:13px;background:#cdcdcd;"></div>
<svg class="a" style="left:851px;top:943px;" width="10" height="11" viewBox="0 0 10 11"><path d="M7 1.5 L3 5.5 L7 9.5" fill="none" stroke="#606060" stroke-width="1.6"/></svg>
<svg class="a" style="left:1413px;top:943px;" width="10" height="11" viewBox="0 0 10 11"><path d="M3 1.5 L7 5.5 L3 9.5" fill="none" stroke="#606060" stroke-width="1.6"/></svg>
<svg class="a" style="left:900px;top:210px" width="480" height="120" viewBox="900 210 480 120"><path fill="#727b85" d="M935.4 234.6 L946.4 234.6 L941 261.8 C945 257 950 254.3 956.2 254.3 C964 254.3 968.5 259.5 967.7 266.5 L961.4 300.7 L951 300.7 L956.8 269.5 C957.5 265 955 262.9 951 262.9 C944 262.9 939 270 937.7 277.4 L933.7 300.7 L922.9 300.7 Z"/><path fill="#727b85" fill-rule="evenodd" d="M1018.5 257.7 C1013 255.3 1007 254.3 1002.4 254.3 C985 254.3 973 268 973 282.5 C973 293 979 300.4 987.5 300.4 C993 300.4 998 297.5 1001.2 293.5 L1000.3 298 C998.5 307 993 311 985 311 C981 311 977 310 974.1 308.5 L971.2 316.6 C975 318.5 980 319.8 985 319.8 C999 319.8 1008 313 1010.5 298.5 Z M1006.4 264 C1004.5 263 1001.5 262.3 999 262.3 C989 262.3 983.9 272 983.9 280 C983.9 287 987 291.8 992 291.8 C998 291.8 1002.5 285 1003.5 279.7 Z"/><path fill="#e30433" d="M1039.3 260 L1059.5 258.6 L1048 282 C1044 290 1040 296 1035.9 301 L1022.6 302.2 Z"/><ellipse fill="#e30433" cx="1054.1" cy="236.4" rx="12" ry="12.7"/><text x="1065.8" y="301.6" font-family="Liberation Sans" font-size="93.6" fill="#4b91d0" textLength="302.6" lengthAdjust="spacingAndGlyphs">systems</text></svg>
<div class="a " style="top:350px;font-size:7.9px;line-height:9px;color:#000;left:889px;-webkit-text-stroke:.2px #000;">HGI Systems IT OG</div>
<div class="a " style="top:361px;font-size:7.9px;line-height:9px;color:#000;left:889px;-webkit-text-stroke:.2px #000;">Bundesstraße ,28</div>
<div class="a " style="top:372px;font-size:7.9px;line-height:9px;color:#000;left:889px;-webkit-text-stroke:.2px #000;">6923 Lauterach</div>
<div class="a " style="top:363px;font-size:8.35px;line-height:10px;color:#000;left:1206px;-webkit-text-stroke:.2px #000;">Ansprechpartner</div>
<div class="a " style="top:363px;font-size:8.35px;line-height:10px;color:#000;left:1295px;-webkit-text-stroke:.2px #000;">Mathias Humml, Mba</div>
<div class="a " style="top:375px;font-size:8.35px;line-height:10px;color:#000;left:1206px;-webkit-text-stroke:.2px #000;">Ihre Referenz</div>
<div class="a " style="top:387px;font-size:8.35px;line-height:10px;color:#000;left:1206px;-webkit-text-stroke:.2px #000;">Ihre Nummer</div>
<div class="a " style="top:387px;font-size:8.35px;line-height:10px;color:#000;left:1295px;-webkit-text-stroke:.2px #000;">10066</div>
<div class="a " style="top:399px;font-size:8.35px;line-height:10px;color:#000;left:1206px;-webkit-text-stroke:.2px #000;">Ihre UID</div>
<div class="a " style="top:411px;font-size:8.35px;line-height:10px;color:#000;left:1206px;-webkit-text-stroke:.2px #000;">Datum</div>
<div class="a " style="top:411px;font-size:8.35px;line-height:10px;color:#000;left:1295px;-webkit-text-stroke:.2px #000;">23.03.2020</div>
<div class="a " style="top:451px;font-size:10.4px;line-height:11px;color:#000;font-weight:bold;left:889px;-webkit-text-stroke:.2px #000;">Rechnung 234</div>
<div class="a " style="top:479px;font-size:8.35px;line-height:10px;color:#000;left:889px;-webkit-text-stroke:.2px #000;">Sehr geehrte Damen und Herren</div>
<div class="a " style="top:496px;font-size:8.35px;line-height:10px;color:#000;left:889px;-webkit-text-stroke:.2px #000;">Hiermit verrechnen wir Ihnen wie folgt:</div>
<div class="a " style="top:534px;font-size:8.35px;line-height:10px;color:#000;left:889.5px;-webkit-text-stroke:.2px #000;">Pos.</div>
<div class="a " style="top:534px;font-size:8.9px;line-height:10px;color:#000;left:919px;-webkit-text-stroke:.2px #000;">Artikelnummer</div>
<div class="a " style="top:534px;font-size:8.35px;line-height:10px;color:#000;left:984px;-webkit-text-stroke:.2px #000;">Artikel</div>
<div class="a " style="top:534px;font-size:8.35px;line-height:10px;color:#000;left:1213px;-webkit-text-stroke:.2px #000;">Menge</div>
<div class="a " style="top:534px;font-size:8.35px;line-height:10px;color:#000;left:1243.2px;-webkit-text-stroke:.2px #000;">Einheit</div>
<div class="a " style="top:534px;font-size:8.35px;line-height:10px;color:#000;right:598px;text-align:right;-webkit-text-stroke:.2px #000;">Preis</div>
<div class="a " style="top:534px;font-size:8.35px;line-height:10px;color:#000;left:1327.7px;-webkit-text-stroke:.2px #000;">Rabatt</div>
<div class="a " style="top:534px;font-size:8.35px;line-height:10px;color:#000;right:515.8px;text-align:right;-webkit-text-stroke:.2px #000;">Gesamt</div>
<div class="a" style="left:887px;top:545px;width:518px;height:2px;background:#a8a8a8;"></div>
<div class="a " style="top:569px;font-size:8.35px;line-height:10px;color:#000;left:889.5px;-webkit-text-stroke:.2px #000;">1</div>
<div class="a " style="top:569px;font-size:8.35px;line-height:10px;color:#000;left:919px;-webkit-text-stroke:.2px #000;">SZG-01</div>
<div class="a " style="top:569px;font-size:8.35px;line-height:10px;color:#000;left:984px;-webkit-text-stroke:.2px #000;">Schraubenziehergriff</div>
<div class="a " style="top:569px;font-size:8.35px;line-height:10px;color:#000;left:1213.5px;-webkit-text-stroke:.2px #000;">1</div>
<div class="a " style="top:569px;font-size:8.35px;line-height:10px;color:#000;right:598px;text-align:right;-webkit-text-stroke:.2px #000;">100,00</div>
<div class="a " style="top:569px;font-size:8.35px;line-height:10px;color:#000;right:515.8px;text-align:right;-webkit-text-stroke:.2px #000;">100,00</div>
<div class="a " style="top:609px;font-size:8.35px;line-height:10px;color:#000;left:889.5px;-webkit-text-stroke:.2px #000;">2</div>
<div class="a " style="top:609px;font-size:8.35px;line-height:10px;color:#000;left:919px;-webkit-text-stroke:.2px #000;">MO15</div>
<div class="a " style="top:609px;font-size:8.35px;line-height:10px;color:#000;left:984px;-webkit-text-stroke:.2px #000;">Monitor</div>
<div class="a " style="top:609px;font-size:8.35px;line-height:10px;color:#000;left:1213.5px;-webkit-text-stroke:.2px #000;">1</div>
<div class="a " style="top:609px;font-size:8.35px;line-height:10px;color:#000;left:1243.2px;-webkit-text-stroke:.2px #000;">Stk</div>
<div class="a " style="top:609px;font-size:8.35px;line-height:10px;color:#000;right:598px;text-align:right;-webkit-text-stroke:.2px #000;">82,00</div>
<div class="a " style="top:609px;font-size:8.35px;line-height:10px;color:#000;right:515.8px;text-align:right;-webkit-text-stroke:.2px #000;">82,00</div>
<div class="a " style="top:626px;font-size:8.35px;line-height:10px;color:#000;left:889.5px;-webkit-text-stroke:.2px #000;">3</div>
<div class="a " style="top:626px;font-size:8.35px;line-height:10px;color:#000;left:919px;-webkit-text-stroke:.2px #000;">hgi-VAC10</div>
<div class="a " style="top:626px;font-size:8.35px;line-height:10px;color:#000;left:984px;-webkit-text-stroke:.2px #000;">VereinsAssistant Cloud 10</div>
<div class="a " style="top:626px;font-size:8.35px;line-height:10px;color:#000;left:1213.5px;-webkit-text-stroke:.2px #000;">1</div>
<div class="a " style="top:626px;font-size:8.35px;line-height:10px;color:#000;right:598px;text-align:right;-webkit-text-stroke:.2px #000;">220,00</div>
<div class="a " style="top:626px;font-size:8.35px;line-height:10px;color:#000;right:515.8px;text-align:right;-webkit-text-stroke:.2px #000;">220,00</div>
<div class="a " style="top:581px;font-size:8.35px;line-height:10px;color:#000;left:984px;-webkit-text-stroke:.2px #000;">Der angenehmste Griff für Schraubenzieher. Für sehr langes arbeiten</div>
<div class="a " style="top:592px;font-size:8.35px;line-height:10px;color:#000;left:984px;-webkit-text-stroke:.2px #000;">optimiert.</div>
<div class="a " style="top:638px;font-size:8.35px;line-height:10px;color:#000;left:984px;-webkit-text-stroke:.2px #000;">Cloud Version des VereinsAssistant mit 10 zeitgleichen Zugängen</div>
<div class="a" style="left:887px;top:653px;width:518px;height:1px;background:#b0b0b0;"></div>
<div class="a " style="top:658px;font-size:8.35px;line-height:10px;color:#000;left:889px;-webkit-text-stroke:.2px #000;">Gesamt netto</div>
<div class="a " style="top:658px;font-size:8.35px;line-height:10px;color:#000;left:1307.7px;-webkit-text-stroke:.2px #000;">EUR</div>
<div class="a " style="top:658px;font-size:8.35px;line-height:10px;color:#000;right:515.8px;text-align:right;-webkit-text-stroke:.2px #000;">402,00</div>
<div class="a " style="top:670px;font-size:8.35px;line-height:10px;color:#000;left:889px;-webkit-text-stroke:.2px #000;">+ 20 % USt.</div>
<div class="a " style="top:670px;font-size:8.35px;line-height:10px;color:#000;left:1307.7px;-webkit-text-stroke:.2px #000;">EUR</div>
<div class="a " style="top:670px;font-size:8.35px;line-height:10px;color:#000;right:515.8px;text-align:right;-webkit-text-stroke:.2px #000;">60,40</div>
<div class="a " style="top:682px;font-size:8.35px;line-height:10px;color:#000;left:889px;-webkit-text-stroke:.2px #000;">+ 0 % USt.</div>
<div class="a " style="top:682px;font-size:8.35px;line-height:10px;color:#000;left:1307.7px;-webkit-text-stroke:.2px #000;">EUR</div>
<div class="a " style="top:682px;font-size:8.35px;line-height:10px;color:#000;right:515.8px;text-align:right;-webkit-text-stroke:.2px #000;">0,00</div>
<div class="a " style="top:694px;font-size:8.35px;line-height:10px;color:#000;left:889px;-webkit-text-stroke:.2px #000;">Gesamt brutto</div>
<div class="a " style="top:694px;font-size:8.35px;line-height:10px;color:#000;left:1307.7px;-webkit-text-stroke:.2px #000;">EUR</div>
<div class="a " style="top:694px;font-size:8.35px;line-height:10px;color:#000;right:515.8px;text-align:right;-webkit-text-stroke:.2px #000;">462,40</div>
<div class="a" style="left:887px;top:705px;width:518px;height:1px;background:#b0b0b0;"></div>
<div class="a " style="top:720px;font-size:8.35px;line-height:10px;color:#000;left:889px;-webkit-text-stroke:.2px #000;">Bankverbindung</div>
<div class="a " style="top:720px;font-size:8.35px;line-height:10px;color:#000;left:984px;-webkit-text-stroke:.2px #000;">Raiba Lauterach</div>
<div class="a " style="top:731px;font-size:8.35px;line-height:10px;color:#000;left:984px;-webkit-text-stroke:.2px #000;letter-spacing:-0.3px;">IBAN: AT23 1234 1234 1234 1234</div>
<div class="a " style="top:742px;font-size:8.35px;line-height:10px;color:#000;left:984px;-webkit-text-stroke:.2px #000;letter-spacing:-0.2px;">BIC: RVVGAT23456</div>
<div class="a " style="top:759px;font-size:8.35px;line-height:10px;color:#000;left:889px;-webkit-text-stroke:.2px #000;">Zahlungsbedingungen</div>
<div class="a " style="top:781px;font-size:8.35px;line-height:10px;color:#000;left:889px;-webkit-text-stroke:.2px #000;">Wir ersuchen Sie, den angeführten Betrag auf das u.a. Bankkonto zu überweisen.</div>
<div class="a " style="top:803px;font-size:8.35px;line-height:10px;color:#000;left:889px;-webkit-text-stroke:.2px #000;">Vielen Dank für Ihren Auftrag!</div>
</body></html>
